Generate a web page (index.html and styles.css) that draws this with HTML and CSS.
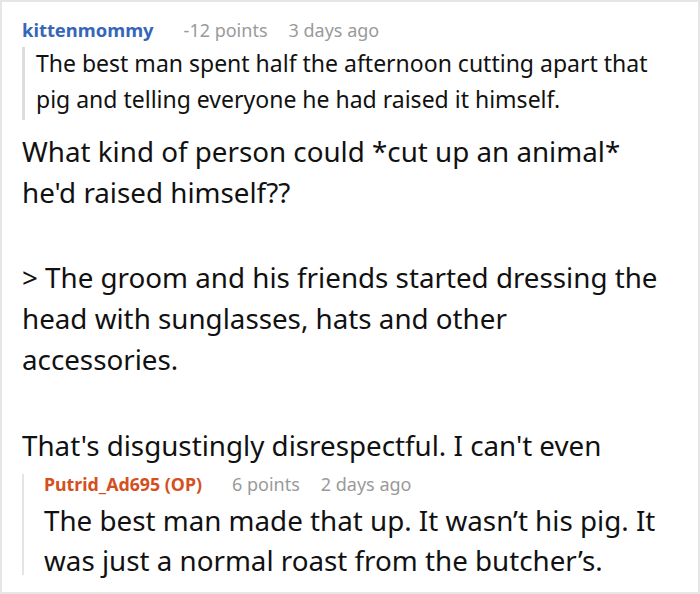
FILE: index.html
```html
<!DOCTYPE html>
<html>
<head>
<meta charset="utf-8">
<link rel="stylesheet" href="styles.css">
</head>
<body>
<div class="frame">
  <div class="comment">
    <div class="meta">
      <span class="author">kittenmommy</span>
      <span class="points">-12 points</span>
      <span class="time">3 days ago</span>
    </div>
    <blockquote class="quote"><span class="quote-text">The best man spent half the afternoon cutting apart that pig and telling everyone he had raised it himself.</span></blockquote>
    <p class="para">What kind of person could *cut up an animal* he'd raised himself??</p>
    <p class="para">&gt; The groom and his friends started dressing the head with sunglasses, hats and other accessories.</p>
    <p class="para last">That's disgustingly disrespectful. I can't even</p>
    <div class="reply">
      <div class="meta reply-meta">
        <span class="author op">Putrid_Ad695 (OP)</span>
        <span class="points">6 points</span>
        <span class="time">2 days ago</span>
      </div>
      <p class="reply-text">The best man made that up. It wasn’t his pig. It was just a normal roast from the butcher’s.</p>
    </div>
  </div>
</div>
</body>
</html>
```

FILE: styles.css
```css
html, body {
  margin: 0;
  padding: 0;
  background: #fff;
}
.frame {
  box-sizing: border-box;
  width: 700px;
  height: 594px;
  border: 2px solid #e6e6e6;
  overflow: hidden;
  font-family: "Noto Sans", sans-serif;
  color: #111;
}
.comment {
  padding: 14px 0 0 20px;
}
.meta {
  display: flex;
  align-items: baseline;
  font-size: 18px;
  line-height: 28px;
  color: #9a9a9a;
  white-space: nowrap;
}
.author {
  font-weight: bold;
  font-size: 18.4px;
  color: #3566b8;
  margin-right: 30px;
}
.author.op {
  font-size: 17.8px;
  color: #d4501e;
}
.points {
  margin-right: 21px;
}
.quote {
  display: flow-root;
  margin: 3px 0 0 0;
  padding: 0 20px 0 11px;
  border-left: 3px solid #dcdcdc;
  font-size: 23px;
  line-height: 36.5px;
}
.quote-text {
  display: block;
  margin: -2.5px 0 2.5px 0;
}
.para {
  margin: 11px 0 44.25px 0;
  font-size: 27.75px;
  line-height: 41px;
  padding-right: 40px;
}
.para.last {
  margin-bottom: 0;
}
.reply {
  display: flow-root;
  border-left: 2px solid #e4e4e4;
  padding-left: 20px;
  margin-top: 8.3px;
}
.reply-meta {
  line-height: 20px;
}
.reply-text {
  margin: 6.6px 0 -5.5px 0;
  font-size: 27.75px;
  line-height: 40px;
}
```
